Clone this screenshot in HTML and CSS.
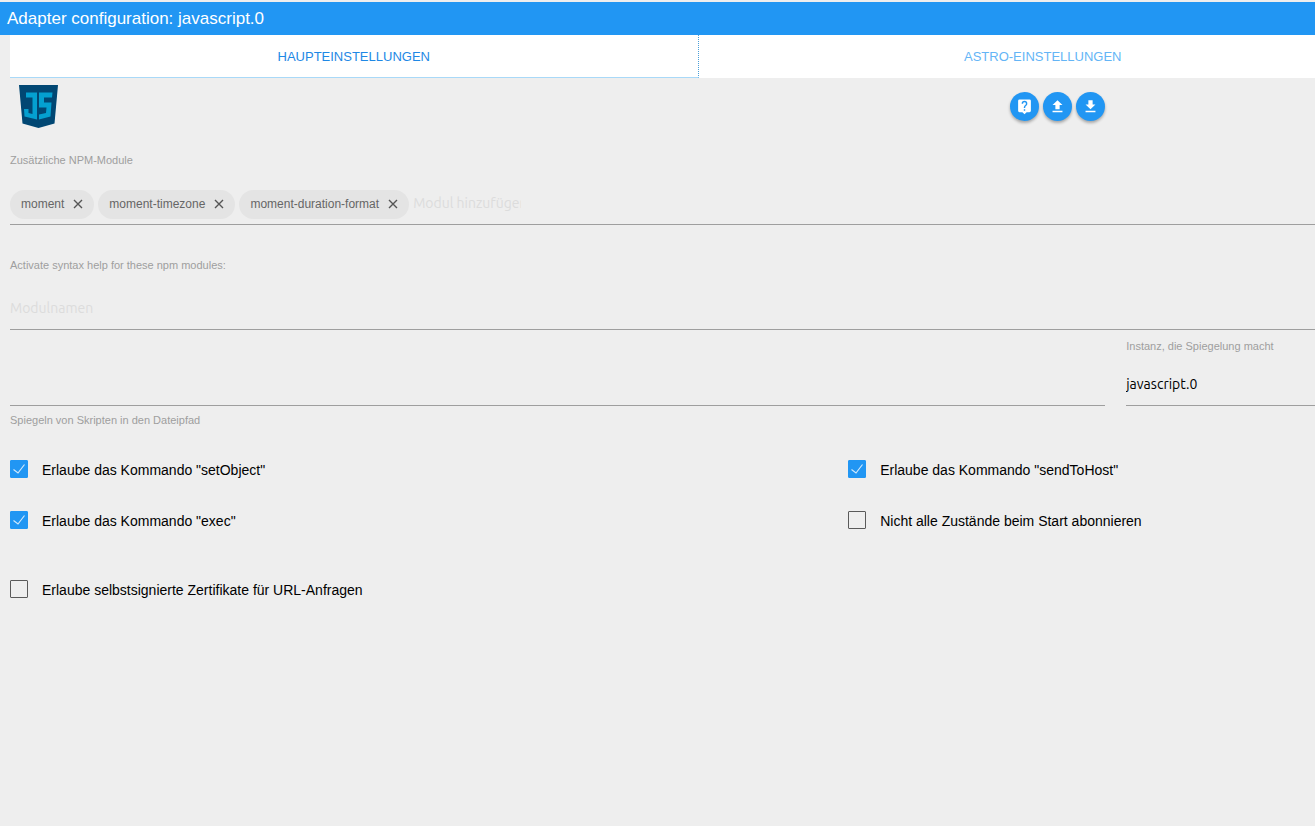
FILE: index.html
```html
<!DOCTYPE html>
<html lang="de">
<head>
<meta charset="utf-8">
<meta name="viewport" content="width=device-width, initial-scale=1">
<title>Adapter configuration: javascript.0</title>
<link rel="stylesheet" href="styles.css">
</head>
<body>
<header class="titlebar"><h1 class="title">Adapter configuration: javascript.0</h1></header>
<main class="page">
  <nav class="tabs">
    <a class="tab active" href="#main">Haupteinstellungen</a>
    <a class="tab" href="#astro">Astro-Einstellungen</a>
  </nav>
  <div class="split toolbar">
    <div class="toolbar-main">
      <svg class="logo" viewBox="0 0 39 43" role="img" aria-label="JavaScript">
        <path fill="#014773" d="M0 0H39L35.500 38.500 19.500 43 3.500 38.500Z"/>
        <path fill="#04a0d0" d="M7 7.500H18V34.500L5.500 31.500 5 24H9.500V28L13.500 29V12.500H7Z"/>
        <path fill="#04a0d0" d="M20 7.500H33.500L33 12.500H25V17.500H32.500L31.500 31.500 20 34.500V29.500L27 28 27.500 22.500H20Z"/>
      </svg>
      <div class="actions">
        <button class="round" type="button" aria-label="Hilfe"><svg viewBox="0 0 24 24"><path fill="#fff" d="M19 2H5a2 2 0 0 0-2 2v14c0 1.100.9 2 2 2h4l3 3 3-3h4c1.100 0 2-.9 2-2V4a2 2 0 0 0-2-2zm-6 16h-2v-2h2v2zm2.100-7.700-.9.900C13.400 11.900 13 12.500 13 14h-2v-.5c0-1.100.5-2.100 1.200-2.800l1.200-1.300c.4-.3.600-.8.600-1.400a2 2 0 0 0-4 0H8a4 4 0 0 1 8 0c0 .9-.4 1.700-.9 2.300z"/></svg></button>
        <button class="round" type="button" aria-label="Hochladen"><svg viewBox="0 0 24 24"><path fill="#fff" d="M9 16h6v-6h4l-7-7-7 7h4zm-4 2h14v2H5z"/></svg></button>
        <button class="round" type="button" aria-label="Herunterladen"><svg viewBox="0 0 24 24"><path fill="#fff" d="M19 9h-4V3H9v6H5l7 7 7-7zM5 18v2h14v-2H5z"/></svg></button>
      </div>
    </div>
  </div>
  <form class="form">
    <div class="field">
      <label class="caption" for="libs">Zusätzliche NPM-Module</label>
      <div class="chips">
        <span class="chip">moment<button class="close" type="button" aria-label="moment entfernen"><svg viewBox="0 0 10 10"><path d="M1 1l8 8M9 1l-8 8"/></svg></button></span>
        <span class="chip">moment-timezone<button class="close" type="button" aria-label="moment-timezone entfernen"><svg viewBox="0 0 10 10"><path d="M1 1l8 8M9 1l-8 8"/></svg></button></span>
        <span class="chip">moment-duration-format<button class="close" type="button" aria-label="moment-duration-format entfernen"><svg viewBox="0 0 10 10"><path d="M1 1l8 8M9 1l-8 8"/></svg></button></span>
        <input class="chip-input" id="libs" type="text" placeholder="Modul hinzufügen">
      </div>
    </div>
    <div class="field">
      <label class="caption" for="typings">Activate syntax help for these npm modules:</label>
      <div class="chips"><input class="chip-input wide" id="typings" type="text" placeholder="Modulnamen"></div>
    </div>
    <div class="split">
      <div class="mirror">
        <input class="line-input" id="path" type="text">
        <label class="caption" for="path">Spiegeln von Skripten in den Dateipfad</label>
      </div>
      <div class="instance">
        <label class="caption" for="instance">Instanz, die Spiegelung macht</label>
        <select class="line-input" id="instance"><option>javascript.0</option></select>
      </div>
    </div>
    <div class="checks">
      <label class="check"><input type="checkbox" checked>Erlaube das Kommando "setObject"</label>
      <label class="check"><input type="checkbox" checked>Erlaube das Kommando "sendToHost"</label>
      <label class="check"><input type="checkbox" checked>Erlaube das Kommando "exec"</label>
      <label class="check"><input type="checkbox">Nicht alle Zustände beim Start abonnieren</label>
      <label class="check last"><input type="checkbox">Erlaube selbstsignierte Zertifikate für URL-Anfragen</label>
    </div>
  </form>
</main>
</body>
</html>
```
FILE: styles.css
```css
* { box-sizing: border-box; }
body {
  margin: 0;
  padding-top: 2px;
  min-height: 100vh;
  overflow-x: hidden;
  background: #eee;
  color: #000;
  font-family: "Liberation Sans", Arial, sans-serif;
  font-size: 14px;
}
.titlebar { background: #2196f3; padding: 0 7px; }
.title { margin: 0; font-size: 17px; font-weight: 400; line-height: 33px; color: #fff; }
.page { margin-left: 10px; width: calc(100% + 62px); }
.tabs { display: grid; grid-template-columns: 1fr 1fr; background: #fff; }
.tab {
  height: 43px;
  line-height: 43px;
  text-align: center;
  font-size: 13px;
  text-transform: uppercase;
  text-decoration: none;
  color: #64b5f6;
}
.tab.active { color: #1e88e5; border-bottom: 1px solid #a9d9f8; border-right: 1px dotted #4a9fd8; }
.split { display: grid; grid-template-columns: 21fr 5fr; column-gap: 21px; }
.toolbar { padding-top: 7px; }
.toolbar-main { display: flex; justify-content: space-between; align-items: center; }
.logo { width: 39px; height: 43px; margin-left: 9px; }
.actions { display: flex; gap: 4px; }
.round {
  display: flex;
  align-items: center;
  justify-content: center;
  width: 29px;
  height: 29px;
  padding: 0;
  border: 0;
  border-radius: 50%;
  background: #2196f3;
  box-shadow: 0 2px 3px rgba(0, 0, 0, .3);
}
.round svg { width: 17px; height: 17px; }
.form { padding-top: 25px; }
.field { margin-bottom: 33px; }
.caption { display: block; font-size: 11px; line-height: 14px; color: #9e9e9e; }
.chips {
  display: flex;
  gap: 4px;
  height: 58px;
  padding-bottom: 5px;
  align-items: flex-end;
  border-bottom: 1px solid #9e9e9e;
}
.chip {
  display: flex;
  align-items: center;
  gap: 9px;
  height: 29px;
  padding: 0 11px 2px;
  border-radius: 15px;
  background: #e4e4e4;
  color: #666;
  font-size: 12px;
}
.close { display: flex; padding: 0; border: 0; background: none; }
.close svg { width: 10px; height: 10px; stroke: #555; stroke-width: 1.4; fill: none; }
.chip-input {
  width: 108px;
  height: 32px;
  padding: 0;
  border: 0;
  background: none;
  font: 14px "Ubuntu", "Noto Sans", sans-serif;
}
.chip-input.wide { flex: 1; }
.chip-input::placeholder { color: #dcdcdc; opacity: 1; }
.field + .split { margin-top: -24px; }
.line-input {
  display: block;
  width: 100%;
  height: 43px;
  padding: 0;
  border: 0;
  border-bottom: 1px solid #9e9e9e;
  border-radius: 0;
  outline: 0;
  appearance: none;
  background: none;
  color: #000;
  font: 14px "Ubuntu", "Noto Sans", sans-serif;
}
.instance { display: grid; gap: 10px; align-content: start; }
.mirror { display: grid; gap: 7px; padding-top: 24px; }
.checks { display: grid; grid-template-columns: 14fr 9fr; row-gap: 31px; padding-top: 33px; }
.check { display: flex; align-items: flex-start; gap: 14px; line-height: 20px; }
.check input {
  appearance: none;
  width: 18px;
  height: 18px;
  margin: 0;
  border: 1px solid #5a5a5a;
  border-radius: 1px;
}
.check input:checked {
  border-color: #2196f3;
  background: #2196f3 url("data:image/svg+xml,%3Csvg xmlns='http://www.w3.org/2000/svg' viewBox='0 0 16 16'%3E%3Cpath d='M2.500 8.500l4.500 3.500L13.500 3.500' fill='none' stroke='%23cfe8fc' stroke-width='1.200'/%3E%3C/svg%3E") center / 16px no-repeat;
}
.check.last { margin-top: 18px; }
```
